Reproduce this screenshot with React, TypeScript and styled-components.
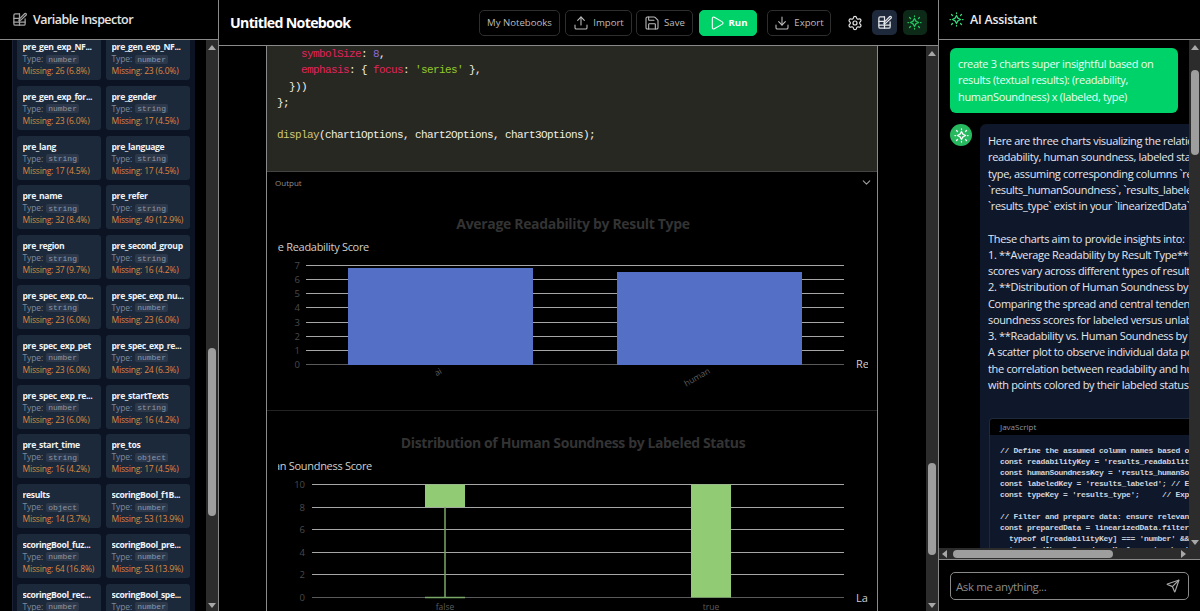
import React from "react";
import styled, { createGlobalStyle } from "styled-components";
import { Settings, Upload, Save, Play, Download, ChevronDown, Send } from "lucide-react";

const UI = `"Open Sans", "Noto Sans", "Liberation Sans", sans-serif`;
const MONO = `"Liberation Mono", "DejaVu Sans Mono", monospace`;

const Global = createGlobalStyle`
  html, body { margin: 0; padding: 0; background: #000; overflow: hidden; }
  * { box-sizing: border-box; }
  #root { width: 1200px; height: 611px; }
`;

const Page = styled.div`
  display: flex; width: 1200px; height: 611px; background: #000; overflow: hidden;
  font-family: ${UI}; color: #e5e7eb;
`;

/* ---------- shared icons ---------- */
const TableEditIcon: React.FC<{ size?: number; color?: string; fillBg?: string }> = ({ size = 16, color = "#a3a3a3", fillBg = "#000" }) => (
  <svg width={size} height={size} viewBox="0 0 24 24" fill="none" stroke={color} strokeWidth="2" strokeLinecap="round" strokeLinejoin="round">
    <path d="M12 3H5a2 2 0 0 0-2 2v14a2 2 0 0 0 2 2h14a2 2 0 0 0 2-2v-8" />
    <path d="M3 10h9M3 16h18M12 3v18" />
    <path d="M20.5 2.5a1.6 1.6 0 0 1 2.2 2.2L14 13l-3 1 1-3z" fill={fillBg} />
  </svg>
);

const SparkIcon: React.FC<{ size?: number; color?: string }> = ({ size = 16, color = "#22c55e" }) => (
  <svg width={size} height={size} viewBox="0 0 24 24" fill="none" stroke={color} strokeWidth="2" strokeLinecap="round" strokeLinejoin="round">
    <path d="M12 5.5 14.2 9.8 18.5 12l-4.3 2.2L12 18.5l-2.2-4.3L5.5 12l4.3-2.2z" />
    <path d="M12 1.5v1M12 21.5v1M1.5 12h1M21.5 12h1M4 4l1.6 1.6M20 4l-1.6 1.6M4 20l1.6-1.6M20 20l-1.6-1.6" />
  </svg>
);

/* ---------- scrollbars ---------- */
const VTrack = styled.div<{ $w?: number }>`
  width: ${(p) => p.$w ?? 12}px; flex: none; height: 100%;
  background: #2c2c2c; display: flex; flex-direction: column; align-items: center;
`;
const VArrow = styled.div<{ $down?: boolean }>`
  width: 0; height: 0; flex: none;
  margin: 5px 0 0;
  border-left: 4px solid transparent; border-right: 4px solid transparent;
  ${(p) => (p.$down ? "border-top: 5px solid #a8a8a8; margin: auto 0 3px;" : "border-bottom: 5px solid #a8a8a8;")}
`;
const VThumb = styled.div<{ $top: number; $h: number }>`
  width: 8px; flex: none; border-radius: 4px; background: #9e9e9e;
  margin-top: ${(p) => p.$top}px; height: ${(p) => p.$h}px;
`;

/* ---------- left sidebar ---------- */
const Sidebar = styled.aside`
  width: 219px; flex: none; height: 100%; display: flex; flex-direction: column;
  border-right: 1px solid #8a8a8a;
`;
const SideHeader = styled.header`
  height: 40px; flex: none; display: flex; align-items: center; gap: 6px; padding: 0 0 0 12px;
  border-bottom: 1px solid #8a8a8a;
  font-size: 12.5px; font-weight: 600; color: #e5e5e5; letter-spacing: -0.55px;
`;
const SideBody = styled.div`
  flex: 1; min-height: 0; display: flex;
`;
const SideGutter = styled.div`
  flex: 1; min-width: 0; padding: 0 11px 0 12px; overflow: hidden;
`;
const VarPanel = styled.div`
  background: #0c1322; height: 100%; padding: 0 4px; overflow: hidden;
  border-left: 1px solid #1a2233;
`;
const VarGrid = styled.div`
  display: grid; grid-template-columns: 83.5px 83.5px; column-gap: 5.5px; row-gap: 5.8px;
  margin-top: -4px;
`;
const VarCard = styled.div`
  height: 44px; background: #1c293b; border-radius: 3px; padding: 5px 4px 0 5.5px;
  font-size: 8.5px; line-height: 12px; overflow: hidden;
`;
const VarName = styled.div`
  font-weight: 700; color: #eef2f7; font-size: 8.6px; line-height: 13px; white-space: nowrap;
  overflow: hidden; letter-spacing: -0.35px;
`;
const VarType = styled.div`
  color: #7f8a9b; display: flex; align-items: center; gap: 3px; height: 12px; margin-top: -1px;
  white-space: nowrap; letter-spacing: -0.1px;
`;
const TypeChip = styled.span`
  background: #2d394b; color: #8c97a8; font-family: ${MONO}; font-size: 8px; line-height: 9px;
  padding: 0 2px; border-radius: 2px; letter-spacing: 0;
`;
const VarMissing = styled.div`
  color: #dc8740; white-space: nowrap; letter-spacing: -0.18px;
`;

/* ---------- centre ---------- */
const Center = styled.main`
  flex: 1; min-width: 0; height: 100%; display: flex; flex-direction: column;
  border-right: 1px solid #8a8a8a;
`;
const TopBar = styled.header`
  height: 46px; flex: none; display: flex; align-items: center; padding: 0 11px 0 11px;
  border-bottom: 1px solid #8a8a8a;
`;
const Title = styled.h1`
  margin: 0; flex: 1; font-size: 14.2px; font-weight: 700; color: #fff; letter-spacing: -0.7px;
`;
const Btn = styled.button<{ $w: number; $run?: boolean; $ml?: number }>`
  display: flex; align-items: center; justify-content: center; gap: 4px;
  width: ${(p) => p.$w}px; height: 26px; margin-left: ${(p) => p.$ml ?? 5}px;
  border-radius: 5px; padding: 0; font-family: ${UI}; font-size: 9.6px;
  border: 1px solid ${(p) => (p.$run ? "#00d26a" : "#2e2e2e")};
  background: ${(p) => (p.$run ? "#00d26a" : "#000")};
  color: ${(p) => (p.$run ? "#fff" : "#bdbdbd")};
  font-weight: ${(p) => (p.$run ? 700 : 400)};
`;
const GearBox = styled.div`
  width: 16px; height: 16px; margin: 0 9px 0 16px; display: flex; color: #e4e4e4;
`;
const IconBtn = styled.div<{ $bg: string; $ml?: number }>`
  width: 24.5px; height: 24.5px; border-radius: 5px; background: ${(p) => p.$bg};
  display: flex; align-items: center; justify-content: center; margin-left: ${(p) => p.$ml ?? 0}px;
`;
const CenterBody = styled.div`
  flex: 1; min-height: 0; display: flex;
`;
const CellGutter = styled.div`
  flex: 1; min-width: 0; padding: 0 48px 0 47px; overflow: hidden;
`;
const Cell = styled.div`
  height: 100%; border-left: 1px solid #8a8a8a; border-right: 1px solid #8a8a8a; display: flex; flex-direction: column;
`;
const CodePane = styled.pre`
  margin: 0; height: 126px; flex: none; background: #272822; color: #f0f0ea;
  font-family: ${MONO}; font-size: 11px; letter-spacing: -0.6px; line-height: 16.3px;
  padding: 0 0 0 10px; border-bottom: 1px solid #444;
`;
const Pink = styled.span` color: #e0245e; `;
const Purple = styled.span` color: #8b6bd6; `;
const Green = styled.span` color: #94c92a; `;
const Yellow = styled.span` color: #cfc678; `;
const OutputBar = styled.div`
  height: 21px; flex: none; display: flex; align-items: center; justify-content: space-between;
  padding: 0 4px 0 8px; font-size: 8px; color: #8e8e8e;
`;
const ChartBox = styled.div<{ $divider?: boolean }>`
  flex: none; padding: 0 10px 0 11px; height: ${(p) => (p.$divider ? 218 : 200)}px;
  ${(p) => (p.$divider ? "border-bottom: 1px solid #232323;" : "")}
`;
const Chart = styled.svg`
  display: block; overflow: hidden;
  font-family: ${UI};
`;

/* ---------- right panel ---------- */
const Assistant = styled.aside`
  width: 261px; flex: none; height: 100%; display: flex; flex-direction: column;
`;
const AssistHeader = styled.header`
  height: 40px; flex: none; display: flex; align-items: center; gap: 6px; padding: 0 0 0 10px;
  border-bottom: 1px solid #8a8a8a; font-size: 12.4px; font-weight: 600; color: #ececec; letter-spacing: -0.25px;
`;
const ChatArea = styled.div`
  flex: 1; min-height: 0; display: flex;
`;
const ChatScroll = styled.div`
  flex: 1; min-width: 0; padding: 8px 0 0 11px; overflow: hidden;
`;
const UserBubble = styled.div`
  width: 228px; height: 65px; background: #00d26a; border-radius: 6px; padding: 8px 8px 0;
  font-size: 11px; line-height: 16.4px; color: #e6fff2; letter-spacing: -0.32px;
`;
const MsgRow = styled.div`
  display: flex; gap: 8px; margin-top: 11px; align-items: flex-start;
`;
const Avatar = styled.div`
  width: 22px; height: 22px; border-radius: 50%; background: #27b95f; flex: none;
  display: flex; align-items: center; justify-content: center;
`;
const MsgBubble = styled.div`
  width: 300px; flex: none; background: #0f172a; border-radius: 6px 0 0 0; padding: 9px 0 0 8px; height: 600px;
`;
const MsgText = styled.div`
  font-size: 11px; line-height: 16.27px; color: #e2e8f0; white-space: pre; letter-spacing: -0.33px;
`;
const CodeBlock = styled.div`
  margin-top: 25px; margin-left: 1px; border-radius: 4px 0 0 0; border: 1px solid #1e293b; border-right: 0;
  overflow: hidden;
`;
const CodeHead = styled.div`
  height: 16px; background: #000; color: #8f96a3; font-size: 8px; line-height: 16px; padding-left: 10px;
`;
const CodeBody = styled.pre`
  margin: 0; padding: 10px 0 0 10px; background: #0f172a; color: #cdd4df;
  font-family: ${MONO}; font-size: 8px; letter-spacing: -0.3px; line-height: 11px; font-weight: 700;
`;
const HBar = styled.div`
  height: 11px; flex: none; background: #2c2c2c; display: flex; align-items: center;
`;
const HArrow = styled.div<{ $right?: boolean }>`
  width: 0; height: 0; flex: none; border-top: 4px solid transparent; border-bottom: 4px solid transparent;
  ${(p) => (p.$right ? "border-left: 5px solid #a8a8a8; margin-left: 68px;" : "border-right: 5px solid #a8a8a8; margin: 0 6px 0 3px;")}
`;
const HThumb = styled.div`
  width: 160px; height: 8px; border-radius: 4px; background: #9e9e9e;
`;
const InputWrap = styled.div`
  height: 52px; flex: none; border-top: 1px solid #8a8a8a; padding: 12px 11px 0 11px;
`;
const InputBox = styled.div`
  height: 28px; border: 1px solid #8a8a8a; border-radius: 5px; display: flex; align-items: center;
  justify-content: space-between; padding: 0 8px 0 5px; font-size: 11.5px; color: #8b8b8b; letter-spacing: -0.4px;
`;

/* ---------- data ---------- */
const vars: [string, string, string][] = [
  ["pre_gen_exp_NF...", "number", "26 (6.8%)"], ["pre_gen_exp_NF...", "number", "23 (6.0%)"],
  ["pre_gen_exp_for...", "number", "23 (6.0%)"], ["pre_gender", "string", "17 (4.5%)"],
  ["pre_lang", "string", "17 (4.5%)"], ["pre_language", "string", "17 (4.5%)"],
  ["pre_name", "string", "32 (8.4%)"], ["pre_refer", "string", "49 (12.9%)"],
  ["pre_region", "string", "37 (9.7%)"], ["pre_second_group", "string", "16 (4.2%)"],
  ["pre_spec_exp_co...", "string", "23 (6.0%)"], ["pre_spec_exp_nu...", "number", "23 (6.0%)"],
  ["pre_spec_exp_pet", "number", "23 (6.0%)"], ["pre_spec_exp_re...", "number", "24 (6.3%)"],
  ["pre_spec_exp_re...", "number", "23 (6.0%)"], ["pre_startTexts", "string", "16 (4.2%)"],
  ["pre_start_time", "string", "16 (4.2%)"], ["pre_tos", "object", "17 (4.5%)"],
  ["results", "object", "14 (3.7%)"], ["scoringBool_f1B...", "number", "53 (13.9%)"],
  ["scoringBool_fuz...", "number", "64 (16.8%)"], ["scoringBool_pre...", "number", "53 (13.9%)"],
  ["scoringBool_rec...", "number", "53 (13.9%)"], ["scoringBool_spe...", "number", "53 (13.9%)"],
];

const message = `Here are three charts visualizing the relationship between
readability, human soundness, labeled status, and result
type, assuming corresponding columns \`results_readability\`,
\`results_humanSoundness\`, \`results_labeled\`, and
\`results_type\` exist in your \`linearizedData\`:

These charts aim to provide insights into:
1. **Average Readability by Result Type**: How readability
scores vary across different types of results
2. **Distribution of Human Soundness by Labeled Status**:
Comparing the spread and central tendency of human
soundness scores for labeled versus unlabeled
3. **Readability vs. Human Soundness by Labeled Status**:
A scatter plot to observe individual data points and
the correlation between readability and human soundness
with points colored by their labeled status`;

const snippet = `// Define the assumed column names based on
const readabilityKey = 'results_readability';
const humanSoundnessKey = 'results_humanSoundness';
const labeledKey = 'results_labeled'; // Expected
const typeKey = 'results_type';     // Expected

// Filter and prepare data: ensure relevant
const preparedData = linearizedData.filter(d =>
  typeof d[readabilityKey] === 'number' &&
  typeof d[humanSoundnessKey] === 'number'`;

/* ---------- charts: coordinates are local to each svg ---------- */
const GRID = "#a6a6a6";
const AXIS = "#5a5a5a";
const snap = (v: number) => Math.round(v - 0.5) + 0.5;

const ReadabilityChart = () => {
  const ys = [7, 6, 5, 4, 3, 2, 1, 0];
  const top = 72.5, step = 14.14;
  return (
    <Chart width={590} height={216} viewBox="0 0 590 216">
      <text x={295} y={36} textAnchor="middle" fontSize="14" fontWeight="700" letterSpacing="-0.33" fill="#333">Average Readability by Result Type</text>
      <text x={91} y={58} textAnchor="end" fontSize="11" letterSpacing="-0.3" fill="#cfcfcf">Average Readability Score</text>
      {ys.map((v, i) => (
        <g key={v}>
          <line x1={28} x2={566} y1={snap(top + i * step)} y2={snap(top + i * step)} stroke={v === 0 ? AXIS : GRID} strokeWidth="1" />
          <text x={22} y={top + i * step + 3.5} textAnchor="end" fontSize="9.5" fill="#4a4a4a">{v}</text>
        </g>
      ))}
      <rect x={70} y={75} width={185} height={97} fill="#5470c6" />
      <rect x={339} y={79} width={185} height={93} fill="#5470c6" />
      <text x={160} y={182} fontSize="8.5" textAnchor="middle" fill="#5c5c5c" transform="rotate(-30 160 179)">ai</text>
      <text x={419} y={187} fontSize="8.5" textAnchor="middle" fill="#5c5c5c" transform="rotate(-30 419 184)">human</text>
      <text x={578} y={175} fontSize="11" fill="#cfcfcf">Result Type</text>
    </Chart>
  );
};

const SoundnessChart = () => {
  const ys = [10, 8, 6, 4, 2, 0];
  const top = 73.5, step = 22.6;
  const bottom = snap(top + 5 * step);
  return (
    <Chart width={590} height={200} viewBox="0 0 590 200">
      <text x={295} y={37} textAnchor="middle" fontSize="14" fontWeight="700" letterSpacing="-0.38" fill="#333">Distribution of Human Soundness by Labeled Status</text>
      <text x={94} y={59} textAnchor="end" fontSize="11" letterSpacing="-0.3" fill="#cfcfcf">Human Soundness Score</text>
      {ys.map((v, i) => (
        <g key={v}>
          <line x1={34} x2={566} y1={snap(top + i * step)} y2={snap(top + i * step)} stroke={v === 0 ? AXIS : GRID} strokeWidth="1" />
          <text x={27} y={top + i * step + 3.5} textAnchor="end" fontSize="9.5" fill="#4a4a4a">{v}</text>
        </g>
      ))}
      <rect x={147} y={top} width={40} height={step} fill="#91cc75" />
      <line x1={167} x2={167} y1={top + step} y2={bottom} stroke="#7aa866" strokeWidth="1.5" />
      <line x1={147} x2={187} y1={bottom} y2={bottom} stroke="#7aa866" strokeWidth="1.5" />
      <rect x={413} y={top} width={40} height={bottom - top} fill="#91cc75" />
      <text x={167} y={199} fontSize="8.5" textAnchor="middle" fill="#5c5c5c">false</text>
      <text x={433} y={199} fontSize="8.5" textAnchor="middle" fill="#5c5c5c">true</text>
      <text x={578} y={bottom + 4} fontSize="11" fill="#cfcfcf">Labeled</text>
    </Chart>
  );
};

export default function App() {
  return (
    <Page>
      <Global />
      <Sidebar>
        <SideHeader>
          <TableEditIcon size={15} color="#a3a3a3" />
          Variable Inspector
        </SideHeader>
        <SideBody>
          <SideGutter>
            <VarPanel>
              <VarGrid>
                {vars.map(([n, t, m], i) => (
                  <VarCard key={i}>
                    <VarName>{n}</VarName>
                    <VarType>Type: <TypeChip>{t}</TypeChip></VarType>
                    <VarMissing>Missing: {m}</VarMissing>
                  </VarCard>
                ))}
              </VarGrid>
            </VarPanel>
          </SideGutter>
          <VTrack>
            <VArrow />
            <VThumb $top={298} $h={168} />
            <VArrow $down />
          </VTrack>
        </SideBody>
      </Sidebar>

      <Center>
        <TopBar>
          <Title>Untitled Notebook</Title>
          <Btn $w={81}>My Notebooks</Btn>
          <Btn $w={67}><Upload size={16} strokeWidth={1.6} />Import</Btn>
          <Btn $w={57} $ml={4}><Save size={16} strokeWidth={1.6} />Save</Btn>
          <Btn $w={58} $ml={6} $run><Play size={16} strokeWidth={1.6} />Run</Btn>
          <Btn $w={64} $ml={10}><Download size={16} strokeWidth={1.6} />Export</Btn>
          <GearBox><Settings size={16} strokeWidth={1.8} /></GearBox>
          <IconBtn $bg="#1e293b"><TableEditIcon size={15} color="#e5e7eb" fillBg="#1e293b" /></IconBtn>
          <IconBtn $bg="#0d2a18" $ml={6}><SparkIcon size={15} color="#22c55e" /></IconBtn>
        </TopBar>
        <CenterBody>
          <CellGutter>
            <Cell>
              <CodePane>
                {"    "}<Pink>symbolSize</Pink>: <Purple>8</Purple>,{"\n"}
                {"    "}<Pink>emphasis</Pink>: {"{ "}<Pink>focus</Pink>: <Green>'series'</Green>{" },"}{"\n"}
                {"  }))"}{"\n"}
                {"};"}{"\n"}
                {"\n"}
                <Yellow>display</Yellow>(chart1Options, chart2Options, chart3Options);
              </CodePane>
              <OutputBar>
                Output
                <ChevronDown size={13} color="#a0a0a0" />
              </OutputBar>
              <ChartBox $divider><ReadabilityChart /></ChartBox>
              <ChartBox><SoundnessChart /></ChartBox>
            </Cell>
          </CellGutter>
          <VTrack>
            <VArrow />
            <VThumb $top={407} $h={92} />
            <VArrow $down />
          </VTrack>
        </CenterBody>
      </Center>

      <Assistant>
        <AssistHeader>
          <SparkIcon size={15} color="#34d67a" />
          AI Assistant
        </AssistHeader>
        <ChatArea>
          <ChatScroll>
            <UserBubble>
              create 3 charts super insightful based on results (textual results): (readability, humanSoundness) x (labeled, type)
            </UserBubble>
            <MsgRow>
              <Avatar><SparkIcon size={15} color="#fff" /></Avatar>
              <MsgBubble>
                <MsgText>{message}</MsgText>
                <CodeBlock>
                  <CodeHead>JavaScript</CodeHead>
                  <CodeBody>{snippet}</CodeBody>
                </CodeBlock>
              </MsgBubble>
            </MsgRow>
          </ChatScroll>
          <VTrack $w={11}>
            <VArrow />
            <VThumb $top={20} $h={85} />
            <VArrow $down />
          </VTrack>
        </ChatArea>
        <HBar>
          <HArrow />
          <HThumb />
          <HArrow $right />
        </HBar>
        <InputWrap>
          <InputBox>
            Ask me anything...
            <Send size={14} color="#a8a8a8" />
          </InputBox>
        </InputWrap>
      </Assistant>
    </Page>
  );
}
